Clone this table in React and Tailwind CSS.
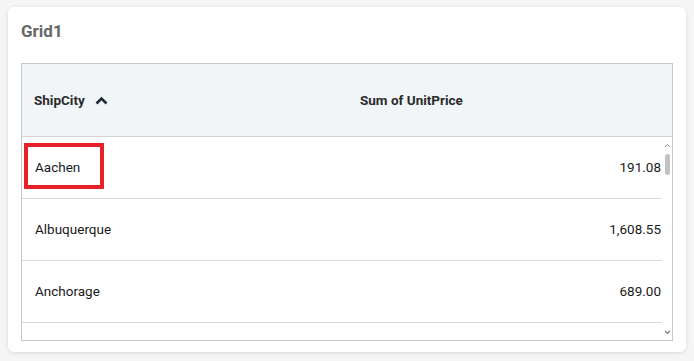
import React from 'react';

const rows = [
    { city: 'Aachen', price: '191.08' },
    { city: 'Albuquerque', price: '1,608.55' },
    { city: 'Anchorage', price: '689.00' },
];

export default function App() {
    return (
        <div className="w-[694px] h-[361px] bg-[#f5f5f5] pt-[7px] px-[8px] font-['Roboto',sans-serif]">
            <div className="bg-white rounded-[6px] h-[345px] px-[13px] shadow-[0_1px_4px_rgba(0,0,0,0.12)]">
                <div className="pt-[14px] h-[34px] text-[17px] leading-[20px] font-bold text-[#666666]">Grid1</div>

                {/* Grid */}
                <div className="mt-[22px] border border-[#c8c8c8] h-[278px] flex flex-col">
                    <div className="h-[73px] shrink-0 bg-[#f2f5f8] border-b border-[#d4d4d4] flex items-center text-[13.5px] font-bold text-[#2b2b2b]">
                        <div className="w-[326px] pl-[12px] flex items-center gap-[10px]">
                            <span>ShipCity</span>
                            <svg width="13" height="9" viewBox="0 0 13 9" fill="none">
                                <path d="M1.5 7.5 L6.5 2.5 L11.5 7.5" stroke="#1f2a3a" strokeWidth="2.6" />
                            </svg>
                        </div>
                        <div className="pl-[12px]">Sum of UnitPrice</div>
                    </div>

                    <div className="flex flex-1 min-h-0">
                        <div className="flex-1 overflow-hidden">
                            {rows.map((r, i) => (
                                <div key={r.city} className="relative h-[62px] border-b border-[#d9d9d9] flex items-center text-[13.5px] text-[#1a1a1a]">
                                    <div className="w-[326px] pl-[13px]">{r.city}</div>
                                    <div className="flex-1 text-right pr-[1px]">{r.price}</div>
                                    {i === 0 && (
                                        <div className="absolute left-[2px] top-[6px] w-[80px] h-[46px] border-[4px] border-[#e8202a]" />
                                    )}
                                </div>
                            ))}
                        </div>

                        {/* scrollbar */}
                        <div className="w-[10px] shrink-0 flex flex-col items-center pt-[6px] pb-[5px]">
                            <svg width="7" height="5" viewBox="0 0 7 5" fill="none">
                                <path d="M1 4 L3.5 1.5 L6 4" stroke="#8a8a8a" strokeWidth="1" />
                            </svg>
                            <div className="mt-[6px] w-[5px] h-[21px] rounded-[3px] bg-[#c1c1c1]" />
                            <div className="flex-1" />
                            <svg width="7" height="5" viewBox="0 0 7 5" fill="none">
                                <path d="M1 1 L3.5 3.5 L6 1" stroke="#6f7a8a" strokeWidth="1.2" />
                            </svg>
                        </div>
                    </div>
                </div>
            </div>
        </div>
    );
}
